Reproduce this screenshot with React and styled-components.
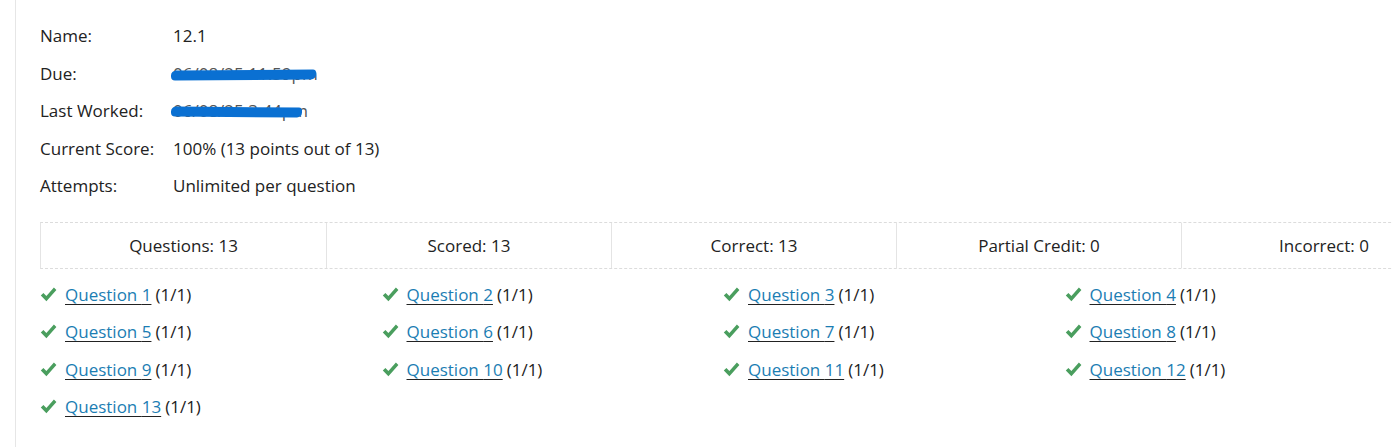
import React from 'react';
import styled, { createGlobalStyle } from 'styled-components';

const GlobalStyle = createGlobalStyle`
  html, body {
    margin: 0;
    padding: 0;
    background: #ffffff;
    overflow: hidden;
  }
  body {
    font-family: "Open Sans", "Liberation Sans", sans-serif;
    font-size: 17px;
    color: #222222;
  }
`;

const Page = styled.div`
  margin-left: 15px;
  border-left: 1px solid #e6e6e6;
  height: 447px;
  padding: 17px 0 0 24px;
  box-sizing: border-box;
  overflow: hidden;
`;

const InfoList = styled.dl`
  display: grid;
  grid-template-columns: 133px 1fr;
  grid-auto-rows: 37.5px;
  align-items: center;
  margin: 0;
`;

const Label = styled.dt`
  margin: 0;
`;

const Value = styled.dd`
  margin: 0;
`;

const Scribble = styled.span`
  display: inline-block;
  position: relative;
  color: #555;
  &::after {
    content: '';
    position: absolute;
    left: -2px;
    right: ${p => p.cut || 0}px;
    top: 8px;
    height: 10px;
    border-radius: 5px 3px 5px 4px;
    background: #0a70d2;
    transform: rotate(${p => p.tilt || 0}deg);
  }
`;

const StatBar = styled.div`
  display: grid;
  grid-template-columns: repeat(5, 285px);
  width: 1425px;
  margin-top: 17px;
  border-top: 1px dashed #dcdcdc;
  border-bottom: 1px dashed #dcdcdc;
  border-left: 1px solid #e4e4e4;
`;

const StatCell = styled.div`
  height: 45px;
  display: flex;
  align-items: center;
  justify-content: center;
  border-left: ${p => (p.first ? 'none' : '1px solid #e4e4e4')};
`;

const QuestionGrid = styled.div`
  display: grid;
  grid-template-columns: repeat(4, 341.5px);
  grid-auto-rows: 37.5px;
  align-items: center;
  margin-top: 7px;
`;

const QuestionItem = styled.div`
  display: flex;
  align-items: center;
  white-space: nowrap;
`;

const Check = styled.svg`
  width: 17px;
  height: 15px;
  margin-right: 8px;
  flex-shrink: 0;
`;

const QuestionLink = styled.a`
  color: #1b7db3;
  text-decoration: underline;
  text-decoration-color: #222222;
  text-underline-offset: 3px;
  margin-right: 4px;
  cursor: pointer;
`;

const CheckIcon = () => (
  <Check viewBox="0 0 17 15">
    <path
      d="M0.8 8.4 L3.4 5.9 L6.4 9.0 L13.9 0.6 L16.4 3.0 L6.4 14.2 Z"
      fill="#4a9e5e"
    />
  </Check>
);

const stats = [
  'Questions: 13',
  'Scored: 13',
  'Correct: 13',
  'Partial Credit: 0',
  'Incorrect: 0',
];

const questions = Array.from({ length: 13 }, (_, i) => i + 1);

export default function App() {
  return (
    <>
      <GlobalStyle />
      <Page>
        <InfoList>
          <Label>Name:</Label>
          <Value>12.1</Value>
          <Label>Due:</Label>
          <Value>
            <Scribble tilt={-0.4} cut={2}>06/08/25 11:59pm</Scribble>
          </Value>
          <Label>Last Worked:</Label>
          <Value>
            <Scribble tilt={0.5} cut={6}>06/08/25 3:44pm</Scribble>
          </Value>
          <Label>Current Score:</Label>
          <Value>100% (13 points out of 13)</Value>
          <Label>Attempts:</Label>
          <Value>Unlimited per question</Value>
        </InfoList>

        <StatBar>
          {stats.map((s, i) => (
            <StatCell key={s} first={i === 0}>
              {s}
            </StatCell>
          ))}
        </StatBar>

        <QuestionGrid>
          {questions.map(n => (
            <QuestionItem key={n}>
              <CheckIcon />
              <QuestionLink>Question {n}</QuestionLink>
              (1/1)
            </QuestionItem>
          ))}
        </QuestionGrid>
      </Page>
    </>
  );
}
